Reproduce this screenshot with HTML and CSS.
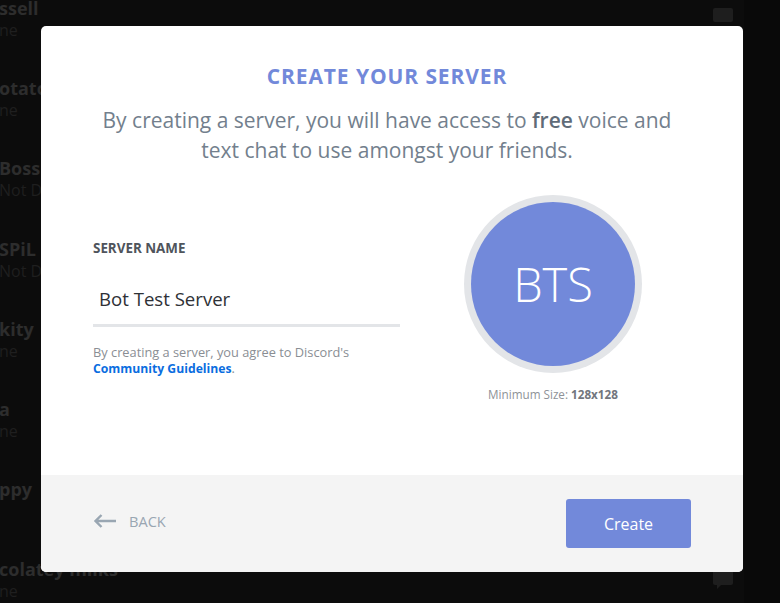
FILE: index.html
```html
<!DOCTYPE html>
<html lang="en">
<head>
<meta charset="utf-8">
<title>Create your server</title>
<link rel="stylesheet" href="styles.css">
</head>
<body>
<div class="app">
  <div class="members">
    <div class="member"><div class="m-name">ssell</div><div class="m-status">ne</div></div>
    <div class="member"><div class="m-name">otato</div><div class="m-status">ne</div></div>
    <div class="member"><div class="m-name">Boss</div><div class="m-status">Not Di</div></div>
    <div class="member"><div class="m-name">SPiL</div><div class="m-status">Not Di</div></div>
    <div class="member"><div class="m-name">kity</div><div class="m-status">ne</div></div>
    <div class="member"><div class="m-name">a</div><div class="m-status">ne</div></div>
    <div class="member"><div class="m-name">ppy</div></div>
    <div class="member"><div class="m-name">colatey milks</div><div class="m-status">ne</div></div>
  </div>
  <div class="main">
    <div class="top-icon"></div>
    <svg class="bubble" width="20" height="22" viewBox="0 0 20 22"><path d="M2 0h16a2 2 0 0 1 2 2v13a2 2 0 0 1-2 2H8l-4 4v-4H2a2 2 0 0 1-2-2V2a2 2 0 0 1 2-2z" fill="#1e1e1e"/></svg>
  </div>
  <div class="side"></div>
</div>

<div class="modal">
  <div class="modal-body">
    <h1 class="title">Create your server</h1>
    <p class="subtitle">By creating a server, you will have access to <strong>free</strong> voice and text chat to use amongst your friends.</p>
    <div class="form-row">
      <div class="form-col">
        <div class="label">Server Name</div>
        <div class="input">Bot Test Server</div>
        <p class="hint">By creating a server, you agree to Discord's<br><a class="link">Community Guidelines</a>.</p>
      </div>
      <div class="avatar-col">
        <div class="avatar-ring"><div class="avatar">BTS</div></div>
        <div class="min-size">Minimum Size: <strong>128x128</strong></div>
      </div>
    </div>
  </div>
  <div class="footer">
    <div class="back">
      <svg class="arrow" width="24" height="14" viewBox="0 0 24 14"><path d="M23 7H2.5M8.5 1L2.5 7l6 6" fill="none" stroke="#99a6b2" stroke-width="2.4"/></svg>
      <span>Back</span>
    </div>
    <div class="create">Create</div>
  </div>
</div>
</body>
</html>
```

FILE: styles.css
```css
html, body {
  margin: 0;
  padding: 0;
  height: 603px;
  overflow: hidden;
  background: #0c0c0c;
  font-family: "Open Sans", "Noto Sans", sans-serif;
}

.app {
  display: flex;
  height: 603px;
}

.members {
  width: 160px;
  margin-top: -3px;
  overflow: hidden;
}

.member {
  height: 80.2px;
  margin-left: -1px;
}

.m-name {
  font-size: 18px;
  font-weight: 700;
  line-height: 22px;
  color: #2d2d2d;
  white-space: nowrap;
}

.m-status {
  font-size: 16px;
  line-height: 22px;
  color: #1f1f1f;
  white-space: nowrap;
}

.main {
  flex: 1;
  display: flex;
  flex-direction: column;
  justify-content: space-between;
  align-items: flex-end;
  padding: 8px 11px 13px 0;
}

.top-icon {
  width: 20px;
  height: 14px;
  background: #1e1e1e;
  border-radius: 2px;
}

.side {
  width: 36px;
  background: #090909;
}

.modal {
  position: absolute;
  left: 41px;
  top: 26px;
  width: 702px;
  height: 546px;
  background: #fff;
  border-radius: 5px;
  overflow: hidden;
  display: flex;
  flex-direction: column;
}

.modal-body {
  height: 449px;
  padding: 37px 52px 0;
  box-sizing: border-box;
}

.title {
  margin: 0;
  padding-right: 10px;
  text-align: center;
  text-transform: uppercase;
  font-size: 21px;
  line-height: 26px;
  font-weight: 700;
  letter-spacing: 0.9px;
  color: #7289da;
}

.subtitle {
  margin: 16px 0 0;
  padding-right: 10px;
  text-align: center;
  font-size: 21px;
  line-height: 30px;
  color: #737f8d;
}

.subtitle strong {
  font-weight: 600;
  color: #5f6b78;
}

.form-row {
  display: flex;
  justify-content: space-between;
  margin-top: 30px;
}

.form-col {
  width: 307px;
  padding-top: 45px;
}

.label {
  font-size: 13.4px;
  line-height: 16px;
  font-weight: 700;
  text-transform: uppercase;
  color: #4f545c;
}

.input {
  margin-top: 23px;
  height: 48px;
  box-sizing: border-box;
  padding: 0 0 8px 6px;
  line-height: 40px;
  font-size: 18.6px;
  color: #2e3136;
  border-bottom: 3px solid #e3e5e8;
}

.hint {
  margin: 17px 0 0;
  font-size: 12.8px;
  line-height: 16px;
  color: #8a8e94;
}

.link {
  color: #0a6de0;
  font-weight: 700;
  font-size: 12.2px;
}

.avatar-col {
  width: 178px;
  margin-right: 49px;
  display: flex;
  flex-direction: column;
  align-items: center;
}

.avatar-ring {
  width: 178px;
  height: 178px;
  box-sizing: border-box;
  border-radius: 50%;
  background: #e3e5e8;
  padding: 7px;
}

.avatar {
  width: 100%;
  height: 100%;
  border-radius: 50%;
  background: #7289da;
  color: #fff;
  display: flex;
  align-items: center;
  justify-content: center;
  font-size: 47px;
  font-weight: 300;
}

.min-size {
  margin-top: 14px;
  font-size: 11.7px;
  line-height: 14px;
  color: #8e9297;
  white-space: nowrap;
}

.min-size strong {
  color: #72767d;
}

.footer {
  flex: 1;
  background: #f4f4f4;
  display: flex;
  align-items: center;
  justify-content: space-between;
  padding: 0 52px;
}

.back {
  display: flex;
  align-items: center;
  gap: 12px;
  margin-bottom: 5px;
  font-size: 14.6px;
  text-transform: uppercase;
  color: #99a6b2;
}

.create {
  width: 125px;
  height: 49px;
  border-radius: 3px;
  background: #7289da;
  color: #fff;
  font-size: 16px;
  display: flex;
  align-items: center;
  justify-content: center;
}
```
